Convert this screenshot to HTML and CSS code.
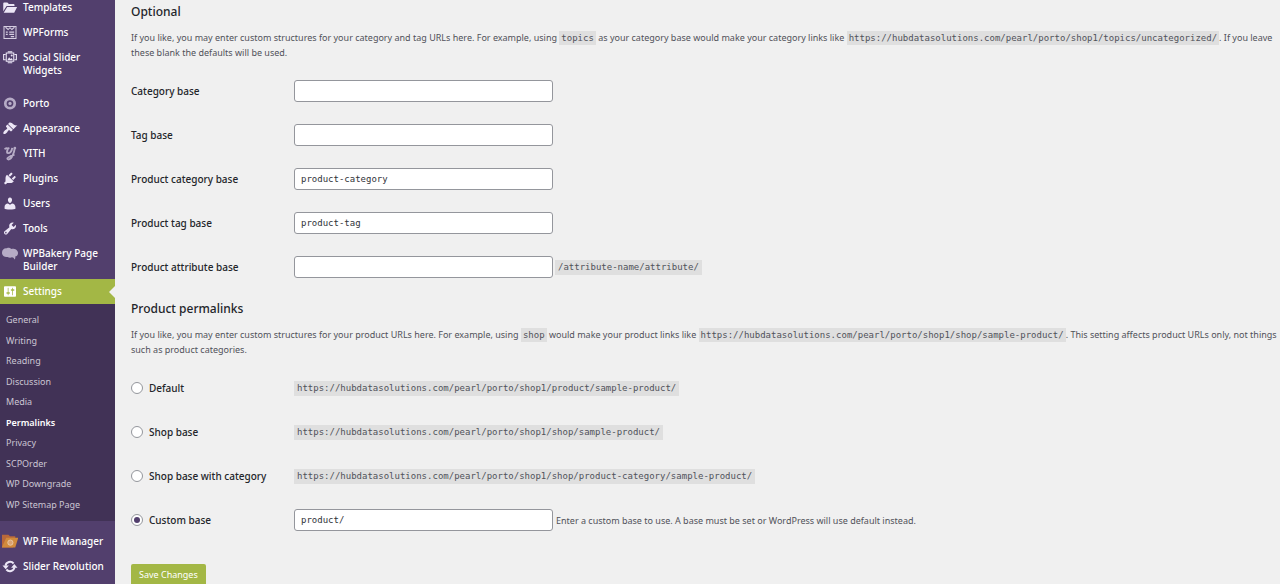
FILE: index.html
```html
<!DOCTYPE html>
<html lang="en">
<head>
<meta charset="utf-8">
<meta name="viewport" content="width=device-width, initial-scale=1">
<title>Permalink Settings</title>
<link rel="stylesheet" href="styles.css">
</head>
<body>
<div class="layout">
  <nav class="sidebar" aria-label="Main menu">
    <ul class="menu">
      <li><a class="menu-link" href="#"><svg class="icon" viewBox="0 0 20 20"><path d="M1 15V4.500c0-.8.400-1.200 1.200-1.200h4.300l2 2h6.300c.8 0 1.200.4 1.200 1.200V8H5.500zM6.300 9.200H19.500L15.600 17H1.600z"/></svg>Templates</a></li>
      <li><a class="menu-link" href="#"><svg class="icon soft" viewBox="0 0 20 20"><path class="line" d="M2 2h16v16H2zM4 3l3.500 3L10 3.500 12.500 6 16 3M4.500 9.500h2.500M9 9.500h6.500M4.500 12.500h2.500M9 12.500h6.500M11 15.500h4.500"/></svg>WPForms</a></li>
      <li><a class="menu-link" href="#"><svg class="icon" viewBox="0 0 20 20"><path class="line" d="M5 4h10v11H5zM4 6H1.500v7H4M16 6h2.500v7H16M7 2.200h6M7 17h6"/><path d="M6.300 13.500l2.500-4 2 2.500 1.200-1.500 2 3z"/><circle cx="12.300" cy="7.300" r="1.300"/></svg>Social Slider Widgets</a></li>
      <li class="gap"><a class="menu-link" href="#"><svg class="icon dim" viewBox="0 0 20 20"><circle class="ring" cx="10" cy="10" r="6.300"/><circle cx="10" cy="10" r="2.200"/></svg>Porto</a></li>
      <li><a class="menu-link" href="#"><svg class="icon" viewBox="0 0 20 20"><path d="M14.480 11.060L7.410 3.990l1.500-1.500c.5-.56 2.300-.47 3.510.32 1.210.8 1.430 1.280 2.910 2.100 1.180.64 2.450 1.260 4.450.85zm-.71.71L6.700 4.700 4.930 6.470c-.39.39-.39 1.020 0 1.410l1.060 1.060c.39.39.39 1.030 0 1.420-.6.6-1.430 1.110-2.210 1.690-.35.26-.7.53-1.010.84C1.430 14.230.4 16.080 1.400 17.070c.99 1 2.840-.03 4.180-1.360.31-.31.58-.66.85-1.020.57-.78 1.080-1.610 1.690-2.210.39-.39 1.020-.39 1.410 0l1.060 1.060c.39.39 1.020.39 1.410 0z"/></svg>Appearance</a></li>
      <li><a class="menu-link" href="#"><svg class="icon dim" viewBox="0 0 20 20"><path class="thick" d="M3 4.500c1-2 4-2.500 3.700 0C6.500 6.500 5 9.500 7.500 9.500c3 0 4.800-3 5.500-7M16.500 2c-.5 4-1.500 8-3.300 11.500-2 4-6 5.500-6.700 3.500-.5-2 4-3.500 9.500-5.500"/><circle cx="8" cy="3" r="1.500"/><circle cx="16.500" cy="2.800" r="1.800"/></svg>YITH</a></li>
      <li><a class="menu-link" href="#"><svg class="icon" viewBox="0 0 20 20"><path d="M13.110 4.360L9.870 7.600 8 5.730l3.240-3.240c.35-.34 1.050-.2 1.560.32.52.51.66 1.210.31 1.550zm-8 1.770l.91-1.120 9.010 9.010-1.190.84c-.71.71-2.630 1.160-3.820 1.160H6.140L4.900 17.260c-.59.59-1.540.59-2.120 0-.59-.58-.59-1.530 0-2.120l1.240-1.240v-3.880c0-1.130.4-3.190 1.090-3.890zm7.260 3.970l3.240-3.240c.34-.35 1.040-.21 1.550.31.52.51.66 1.210.31 1.550l-3.240 3.250z"/></svg>Plugins</a></li>
      <li><a class="menu-link" href="#"><svg class="icon" viewBox="0 0 20 20"><path d="M10 9.250c-2.270 0-2.730-3.440-2.730-3.440C7 4.020 7.820 2 9.970 2c2.160 0 2.980 2.020 2.710 3.810 0 0-.41 3.440-2.680 3.440zm0 2.570L12.720 10c2.390 0 4.520 2.330 4.520 4.530v2.490s-3.650 1.130-7.240 1.130c-3.650 0-7.240-1.130-7.240-1.130v-2.490c0-2.250 1.940-4.480 4.470-4.480z"/></svg>Users</a></li>
      <li><a class="menu-link" href="#"><svg class="icon" viewBox="0 0 20 20"><path d="M16.680 9.770c-1.340 1.340-3.300 1.670-4.950.99l-5.410 6.520c-.99.99-2.590.99-3.580 0s-.99-2.590 0-3.570l6.520-5.420c-.68-1.650-.35-3.610.99-4.950 1.280-1.280 3.120-1.620 4.720-1.060l-2.890 2.890 2.820 2.820 2.860-2.870c.53 1.580.18 3.390-1.080 4.650zM3.810 16.210c.4.39 1.040.39 1.430 0 .4-.4.4-1.040 0-1.430-.39-.4-1.030-.4-1.430 0-.39.39-.39 1.030 0 1.430z"/></svg>Tools</a></li>
      <li><a class="menu-link" href="#"><svg class="icon dim" viewBox="1 1 20 18"><path d="M1 9C1 5 4 3 7 3.500c2-1 4-.8 5.500.8C16 3.500 21 5 21 9.500c0 2.500-1.500 4-3.500 4.300.5 1.500 0 3-1 3.700-.5-1.800-1.500-2.500-3-2.700-2 .9-4 .6-5.500-.5C4 15 1 12.500 1 9z"/></svg>WPBakery Page Builder</a></li>
      <li>
        <a class="menu-link current" href="#"><svg class="icon" viewBox="0 0 20 20"><path d="M18 16V4c0-.55-.45-1-1-1H3c-.55 0-1 .45-1 1v12c0 .55.45 1 1 1h14c.55 0 1-.45 1-1zM8 11h1c.55 0 1 .45 1 1s-.45 1-1 1H8v1.500c0 .28-.22.5-.5.5s-.5-.22-.5-.5V13H6c-.55 0-1-.45-1-1s.45-1 1-1h1V5.500c0-.28.22-.5.5-.5s.5.22.5.5V11zm5-2h-1c-.55 0-1-.45-1-1s.45-1 1-1h1V5.500c0-.28.22-.5.5-.5s.5.22.5.5V7h1c.55 0 1 .45 1 1s-.45 1-1 1h-1v5.500c0 .28-.22.5-.5.5s-.5-.22-.5-.5V9z"/></svg>Settings</a>
        <ul class="submenu">
          <li><a href="#">General</a></li>
          <li><a href="#">Writing</a></li>
          <li><a href="#">Reading</a></li>
          <li><a href="#">Discussion</a></li>
          <li><a href="#">Media</a></li>
          <li><a class="active" href="#" aria-current="page">Permalinks</a></li>
          <li><a href="#">Privacy</a></li>
          <li><a href="#">SCPOrder</a></li>
          <li><a href="#">WP Downgrade</a></li>
          <li><a href="#">WP Sitemap Page</a></li>
        </ul>
      </li>
      <li class="gap"><a class="menu-link" href="#"><svg class="icon" viewBox="1 0 20 20"><path fill="#b9683a" d="M0 18V1h9l2 2h7v4L15 18z"/><path fill="#d08a3c" d="M0 18L6 5h16l-4 13z"/><circle cx="11.500" cy="11.500" r="3.500" fill="#d9a373" stroke="#ecd2b4"/></svg>WP File Manager</a></li>
      <li><a class="menu-link" href="#"><svg class="icon" viewBox="0 0 20 20"><path class="thick" d="M4 9A6.200 6.200 0 0 1 14.800 6M16 11A6.200 6.200 0 0 1 5.200 14"/><path d="M0 8.500h8.500l-4.200 5zM20 11.500h-8.500l4.200-5z"/></svg>Slider Revolution</a></li>
    </ul>
  </nav>

  <main class="content">
    <form>
      <h2>Optional</h2>
      <p>If you like, you may enter custom structures for your category and tag URLs here. For example, using <code>topics</code> as your category base would make your category links like <code>https://hubdatasolutions.com/pearl/porto/shop1/topics/uncategorized/</code>. If you leave these blank the defaults will be used.</p>
      <div class="row"><label for="category">Category base</label><div class="field"><input class="text" id="category" type="text"></div></div>
      <div class="row"><label for="tag">Tag base</label><div class="field"><input class="text" id="tag" type="text"></div></div>
      <div class="row"><label for="pcategory">Product category base</label><div class="field"><input class="text" id="pcategory" type="text" value="product-category"></div></div>
      <div class="row"><label for="ptag">Product tag base</label><div class="field"><input class="text" id="ptag" type="text" value="product-tag"></div></div>
      <div class="row"><label for="pattribute">Product attribute base</label><div class="field"><input class="text" id="pattribute" type="text"><code>/attribute-name/attribute/</code></div></div>

      <h2>Product permalinks</h2>
      <p>If you like, you may enter custom structures for your product URLs here. For example, using <code>shop</code> would make your product links like <code>https://hubdatasolutions.com/pearl/porto/shop1/shop/sample-product/</code>. This setting affects product URLs only, not things such as product categories.</p>
      <div class="row"><label><input class="radio" type="radio" name="base">Default</label><div class="field"><code>https://hubdatasolutions.com/pearl/porto/shop1/product/sample-product/</code></div></div>
      <div class="row"><label><input class="radio" type="radio" name="base">Shop base</label><div class="field"><code>https://hubdatasolutions.com/pearl/porto/shop1/shop/sample-product/</code></div></div>
      <div class="row"><label><input class="radio" type="radio" name="base">Shop base with category</label><div class="field"><code>https://hubdatasolutions.com/pearl/porto/shop1/shop/product-category/sample-product/</code></div></div>
      <div class="row"><label><input class="radio" type="radio" name="base" checked>Custom base</label><div class="field"><input class="text" type="text" value="product/" aria-label="Custom base"><span class="hint">Enter a custom base to use. A base must be set or WordPress will use default instead.</span></div></div>
      <button class="save" type="submit">Save Changes</button>
    </form>
  </main>
</div>
</body>
</html>
```
FILE: styles.css
```css
* { box-sizing: border-box; }
html { scrollbar-width: none; }
body {
  margin: 0;
  background: #f0f0f0;
  color: #50525a;
  font: 9px/15px "Noto Sans", "Open Sans", sans-serif;
}
.layout { display: flex; min-height: 100vh; }
.sidebar { flex: 0 0 115px; overflow: hidden; background: #523f6d; }
ul { margin: 0; padding: 0; list-style: none; }
a { color: inherit; text-decoration: none; }
.menu { margin-top: -5px; color: #fff; font-size: 10px; font-weight: 500; line-height: 13px; }
.menu-link { position: relative; display: flex; align-items: flex-start; gap: 5px; padding: 6px 8px 6px 2px; }
.gap { padding-top: 8px; }
.icon { flex: 0 0 16px; height: 15px; margin: -1px 0; fill: #ece6f6; }
.dim { opacity: .65; }
.soft { opacity: .85; }
.line, .thick, .ring { fill: none; stroke: #ece6f6; stroke-width: 1.4; }
.thick { stroke-width: 2.6; }
.ring { stroke-width: 3.6; }
.current { background: #a3b745; }
.current .icon { fill: #fff; }
.current::after {
  content: "";
  position: absolute;
  right: 0;
  top: 50%;
  margin-top: -6px;
  border: 6px solid transparent;
  border-left: 0;
  border-right-color: #f0f0f0;
}
.submenu { padding: 6px 0; background: #413256; color: #cbc5d3; font-size: 9px; font-weight: 400; line-height: 20px; }
.submenu li:nth-child(even) { line-height: 21px; }
.submenu a { display: block; padding: 0 6px; }
.submenu .active { color: #fff; font-weight: 600; }

.content { flex: 1; min-width: 0; padding: 4px 0 0 16px; }
h2 { margin: 0; color: #23252a; font-size: 12px; font-weight: 500; line-height: 16px; }
.row + h2 { margin-top: 12px; }
p { margin: 10px 0 9px; }
code { padding: 2px 3px; background: #dfdfdf; font: 9px/11px "DejaVu Sans Mono", monospace; }
p code { padding: 2px; }
.row { display: grid; grid-template-columns: 163px 1fr; align-items: center; min-height: 44px; }
label { display: flex; align-items: center; gap: 6px; color: #23252a; font-size: 10px; font-weight: 500; }
.field { display: flex; align-items: center; gap: 2px; }
.text {
  width: 259px;
  height: 22px;
  padding: 0 6px;
  border: 1px solid #94969c;
  border-radius: 3px;
  background: #fff;
  color: #303238;
  font: 9px "DejaVu Sans Mono", monospace;
}
.hint { padding-left: 1px; }
.radio {
  appearance: none;
  display: grid;
  place-items: center;
  width: 12px;
  height: 12px;
  margin: 0;
  border: 1px solid #94969c;
  border-radius: 50%;
  background: #fff;
}
.radio:checked::before { content: ""; width: 6px; height: 6px; border-radius: 50%; background: #523f6d; }
.save {
  display: block;
  margin-top: 22px;
  padding: 3px 8px;
  border: 0;
  border-radius: 2px;
  background: #a3b745;
  color: #fff;
  font: 9px/16px "Noto Sans", sans-serif;
}
```
